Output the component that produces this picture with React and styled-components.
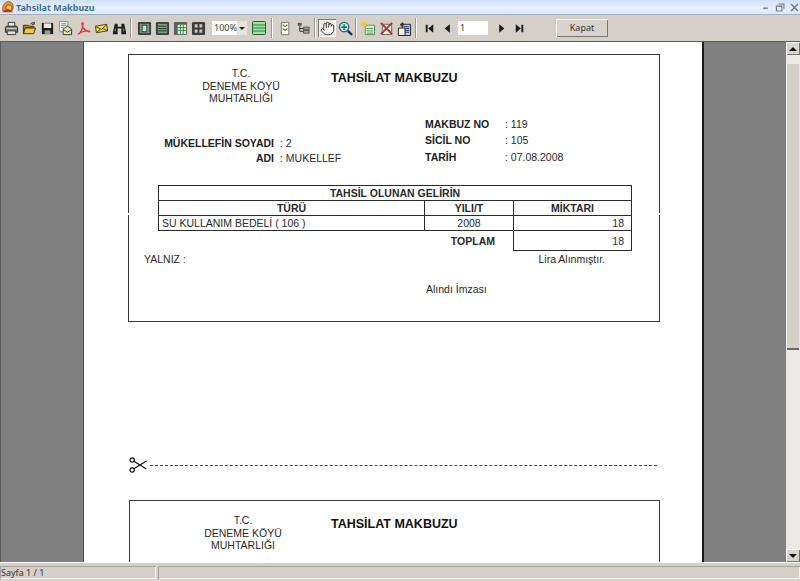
import React from "react";
import styled, { createGlobalStyle } from "styled-components";
import { Hand } from "lucide-react";

const GlobalStyle = createGlobalStyle`
  html, body {
    margin: 0;
    padding: 0;
    height: 100%;
    overflow: hidden;
    background: #d4d0c8;
  }
`;

const Window = styled.div`
  width: 800px;
  height: 581px;
  display: flex;
  flex-direction: column;
  overflow: hidden;
  background: #d4d0c8;
  font-family: "Noto Sans", "Liberation Sans", sans-serif;
`;

const TitleBar = styled.div`
  height: 14px;
  flex: none;
  display: flex;
  align-items: center;
  padding: 0 0 0 1px;
  background: linear-gradient(#cfe0f6, #e6f0fb 55%, #dce8f6);
  border-bottom: 1px solid #9fb0c2;
`;

const TitleText = styled.span`
  margin-left: 1px;
  font-size: 9px;
  font-weight: 700;
  color: #41709f;
`;

const WindowButtons = styled.div`
  margin-left: auto;
  display: flex;
  gap: 3px;
`;

const Toolbar = styled.div`
  height: 26px;
  flex: none;
  display: flex;
  align-items: center;
  padding-left: 2px;
  background: #d4d0c8;
  border-bottom: 1px solid #5a5a58;
`;

const ToolButton = styled.div`
  width: 18px;
  height: 18px;
  flex: none;
  display: flex;
  align-items: center;
  justify-content: center;
  background: ${(p) => (p.$pressed ? "#efedea" : "transparent")};
  box-shadow: ${(p) => (p.$pressed ? "inset 1px 1px 0 #807d76, inset -1px -1px 0 #fff" : "none")};
`;

const Separator = styled.div`
  width: 2px;
  height: 20px;
  flex: none;
  margin: 0 ${(p) => p.$right ?? 3}px 0 ${(p) => p.$left ?? 2}px;
  border-left: 1px solid #9a978f;
  border-right: 1px solid #fff;
  box-sizing: border-box;
`;

const Combo = styled.div`
  width: 35px;
  height: 14px;
  flex: none;
  margin: 0 3px 0 5px;
  display: flex;
  background: #fff;
  font-size: 9px;
  line-height: 14px;
  color: #444;
  padding-left: 2px;
  box-sizing: border-box;
`;

const ComboArrow = styled.span`
  margin-left: auto;
  width: 11px;
  background: #e6e3dd;
  display: flex;
  align-items: center;
  justify-content: center;
  &::after {
    content: "";
    border: 3px solid transparent;
    border-top: 3px solid #222;
    border-bottom: 0;
  }
`;

const PageInput = styled.div`
  width: 30px;
  height: 14px;
  flex: none;
  margin: 0 4px 0 2px;
  padding-left: 2px;
  box-sizing: border-box;
  background: #fff;
  font-size: 9px;
  line-height: 14px;
  color: #333;
`;

const CloseButton = styled.div`
  width: 52px;
  height: 18px;
  flex: none;
  margin-left: 28px;
  text-align: center;
  font-size: 9px;
  line-height: 18px;
  color: #333;
  background: #d8d4cd;
  box-shadow: inset 1px 1px 0 #f4f3f0, inset -1px -1px 0 #77746e;
`;

const Viewer = styled.div`
  height: 520px;
  flex: none;
  display: flex;
  background: #808080;
  overflow: hidden;
`;

const Desk = styled.div`
  flex: 1;
  padding-left: 83px;
  box-sizing: border-box;
  border-left: 1px solid #5c5c5c;
`;

const Page = styled.div`
  width: 621px;
  margin-left: -1px;
  height: 100%;
  padding: 12px 0 0 44px;
  box-sizing: border-box;
  background: #fff;
  border-left: 1px solid #4a4a4a;
  border-right: 2px solid #1a1a1a;
  overflow: hidden;
`;

const Receipt = styled.div`
  position: relative;
  width: ${(p) => (p.$second ? 531 : 532)}px;
  height: 268px;
  margin-left: ${(p) => (p.$second ? 1 : 0)}px;
  box-sizing: border-box;
  border: 1px solid #3a3a3a;
  padding-top: 12px;
  font-family: "Liberation Sans", Arial, sans-serif;
  font-size: 10.5px;
  color: #2a2a2a;
  /* the report has a small break in its side borders */
  &::after {
    content: "";
    position: absolute;
    left: -1px;
    right: -1px;
    top: 158px;
    height: 2px;
    border-left: 1px solid #fff;
    border-right: 1px solid #fff;
  }
`;

const HeadRow = styled.div`
  display: flex;
  align-items: flex-start;
`;

const Org = styled.div`
  width: ${(p) => p.$width}px;
  margin: ${(p) => p.$drop}px 0 0 ${(p) => p.$pad}px;
  flex: none;
  text-align: center;
  line-height: 12.5px;
`;

const Title = styled.div`
  margin-top: 4px;
  font-size: 12.5px;
  font-weight: 700;
  line-height: 14px;
  color: #111;
`;

const InfoRow = styled.div`
  display: grid;
  grid-template-columns: 296px 1fr;
  align-items: end;
  margin-top: 11px;
`;

const Taxpayer = styled.div`
  display: grid;
  grid-template-columns: 145px 1fr;
  column-gap: 6px;
  line-height: 15px;
`;

const Meta = styled.div`
  display: grid;
  grid-template-columns: 80px 1fr;
  line-height: 16.5px;
  padding-bottom: 1px;
`;

const Label = styled.span`
  font-weight: 700;
  color: #222;
  text-align: ${(p) => (p.$right ? "right" : "left")};
`;

const ReportTable = styled.table`
  margin: 19px 0 0 29px;
  width: 473px;
  border-collapse: collapse;
  table-layout: fixed;
  font-size: 10.5px;
  color: #2a2a2a;
`;

const Cell = styled.td`
  height: 14px;
  padding: 0 ${(p) => p.$pad ?? 3}px;
  line-height: 14px;
  white-space: nowrap;
  border: ${(p) => (p.$bare ? "0" : "1px solid #2a2a2a")};
  text-align: ${(p) => p.$align || "center"};
  font-weight: ${(p) => (p.$bold ? 700 : 400)};
`;

const TotalRow = styled.tr`
  height: 20px;
`;

const FootRow = styled.div`
  display: flex;
  justify-content: space-between;
  padding: 1px 54px 0 15px;
  line-height: 14px;
`;

const Signature = styled.div`
  margin: 16px 0 0 297px;
  line-height: 14px;
`;

const CutLine = styled.div`
  display: flex;
  align-items: center;
  height: 14px;
  margin: 136px 0 28px 1px;
  width: 528px;
`;

const Dashes = styled.div`
  flex: 1;
  margin-left: 3px;
  border-top: 1px dashed #444;
`;

const Scrollbar = styled.div`
  width: 14px;
  flex: none;
  display: flex;
  flex-direction: column;
  background: #ece9e4;
`;

const ScrollButton = styled.div`
  height: 13px;
  flex: none;
  margin-top: ${(p) => (p.$down ? "auto" : "0")};
  display: flex;
  align-items: center;
  justify-content: center;
  background: #d9d6cf;
  box-shadow: inset 1px 1px 0 #fff, inset -1px -1px 0 #77746e;
  &::after {
    content: "";
    border: 4px solid transparent;
    ${(p) => (p.$down ? "border-top: 4px solid #111; border-bottom: 0;" : "border-bottom: 4px solid #111; border-top: 0;")}
  }
`;

const ScrollThumb = styled.div`
  height: 286px;
  flex: none;
  margin-top: 9px;
  background: #d4d0c8;
  box-shadow: inset 1px 0 0 #f4f3f0, inset -1px 0 0 #e4e1db, inset 0 -2px 0 #6a6864;
`;

const StatusBar = styled.div`
  flex: 1;
  display: flex;
  gap: 2px;
  padding: 3px 0 2px 0;
  border-top: 1px solid #fff;
`;

const StatusPanel = styled.div`
  width: ${(p) => (p.$fill ? "auto" : "155px")};
  flex: ${(p) => (p.$fill ? 1 : "none")};
  padding-left: 1px;
  font-size: 9px;
  line-height: 13px;
  color: #333;
  box-shadow: inset 1px 1px 0 #a6a299, inset -1px -1px 0 #f4f3f0;
`;

const Svg = styled.svg.attrs({ viewBox: "0 0 16 16" })`
  width: ${(p) => p.$size || 15}px;
  height: ${(p) => p.$size || 15}px;
  display: block;
  flex: none;
`;

const AppIcon = () => (
  <Svg $size={14}>
    <path d="M2 12 C1 6 5 1 10 2 C14 3 15 8 13 12 Z" fill="#e8902a" stroke="#b9461c" />
    <circle cx="9" cy="9" r="3.5" fill="#f6d860" stroke="#c8301c" />
    <path d="M1 14 L8 10 L14 14 Z" fill="#cf2f1e" />
  </Svg>
);

const MinIcon = () => (
  <Svg $size={11}><path d="M3 9h7" stroke="#66788c" strokeWidth="2" /></Svg>
);
const RestoreIcon = () => (
  <Svg $size={11}>
    <path d="M5 3h8v7M2 6h8v7H2z" fill="none" stroke="#66788c" strokeWidth="1.6" />
  </Svg>
);
const CloseIcon = () => (
  <Svg $size={11}><path d="M3 3l10 10M13 3L3 13" stroke="#66788c" strokeWidth="2" /></Svg>
);

const PrintIcon = () => (
  <Svg>
    <path d="M4.5 1.5h7v5h-7z" fill="#eee" stroke="#333" />
    <path d="M1.5 7c0-1 1-1.5 2-1.5h9c1 0 2 .5 2 1.5v5h-13z" fill="#7d7d78" stroke="#222" />
    <path d="M3.5 10.5h9v4h-9z" fill="#ddd" stroke="#333" />
    <path d="M2.5 8h11" stroke="#d0d0cc" />
  </Svg>
);
const OpenIcon = () => (
  <Svg>
    <path d="M1.5 4.5h5l1 1h5v2h-9l-2 6z" fill="#a8861e" stroke="#3b3210" />
    <path d="M3.5 7.5h11l-2 6h-11z" fill="#ecc83e" stroke="#3b3210" />
    <path d="M9 3.5c1-2 3-2 4-1M13 1v2.5h-2.5" fill="none" stroke="#222" />
  </Svg>
);
const SaveIcon = () => (
  <Svg>
    <path d="M2 2h12v12H2z" fill="#1d1d1d" />
    <path d="M4 2.5h8v5H4z" fill="#e8e8e4" />
    <path d="M5 10h6v4H5z" fill="#9a9a96" />
  </Svg>
);
const MailDocIcon = () => (
  <Svg>
    <path d="M1.5 .5h9v11h-9z" fill="#fff" stroke="#7f8c90" />
    <path d="M3 3h6M3 5h6M3 7h3" stroke="#3c9a5c" />
    <path d="M5.5 8.5l4.5-3 4.5 3v6h-9z" fill="#f4e9b4" stroke="#333" />
    <path d="M5.5 9l4.5 3 4.5-3" fill="none" stroke="#333" />
  </Svg>
);
const PdfIcon = () => (
  <Svg>
    <path
      d="M2 14c3-1 5-6 5.5-11 0-2-1.500-1-1 1 1 4 4 7 8 7.500 1 0-1-1.500-4-1-3 .5-6 2-8.500 3.500z"
      fill="none"
      stroke="#dc3a32"
      strokeWidth="1.5"
    />
  </Svg>
);
const MailIcon = () => (
  <Svg>
    <path d="M1.5 5.500l12-2 1 7-12 2z" fill="#f3e24e" stroke="#3d3a18" />
    <path d="M2 6l6 3 5.500-5M3 12l4-3.500M14 10l-5-2" fill="none" stroke="#3d3a18" />
  </Svg>
);
const BinocularIcon = () => (
  <Svg>
    <path d="M3 3h3v3h4V3h3l2 9v2h-5V8H6v6H1v-2z" fill="#1f1f1f" />
    <path d="M3 8h1v3H3zM12 8h1v3h-1z" fill="#999" />
  </Svg>
);

const ViewFrame = ({ children, fill = "#7f9c82" }) => (
  <Svg>
    <rect x="1" y="1" width="14" height="14" rx="1.5" fill="#3d3d3d" />
    <rect x="3" y="3" width="10" height="10" fill={fill} />
    {children}
  </Svg>
);
const SingleIcon = () => (
  <ViewFrame><rect x="5.5" y="4.500" width="5" height="7" fill="#cfe0cf" stroke="#2b3a2b" /></ViewFrame>
);
const WidthIcon = () => (
  <ViewFrame><path d="M3.5 5.500h9M3.500 8h9M3.500 10.500h9" stroke="#1f3a24" /></ViewFrame>
);
const FacingIcon = () => (
  <Svg>
    <rect x="1" y="1" width="14" height="14" rx="1.5" fill="#5c5f5a" />
    <rect x="5" y="4" width="9" height="10" fill="#dcecd6" />
    <path d="M5 7h9M5 10h9M8 4v10M11 4v10" stroke="#2f8a4c" />
  </Svg>
);
const GridIcon = () => (
  <Svg>
    <rect x="1" y="1" width="14" height="14" rx="1.5" fill="#3d3d3d" />
    <path d="M4 3.500h3v3.500H4zM9 3.500h3v3.500H9zM4 9h3v3.500H4zM9 9h3v3.500H9z" fill="#c8ccc4" />
  </Svg>
);
const GreenPageIcon = () => (
  <Svg $size={16}>
    <rect x="1.5" y="1.5" width="13" height="13" rx="1" fill="#a6e0a6" stroke="#2f5a36" />
    <path d="M2 5h12M2 8h12M2 11h12" stroke="#1f8a3c" strokeWidth="1.2" />
  </Svg>
);
const ExpandIcon = () => (
  <Svg>
    <path d="M3.5 1.500h8v13h-8z" fill="#f6f6ee" stroke="#77756c" />
    <path d="M5 4l2.500 2L10 4M5 8l2.500 2L10 8" fill="none" stroke="#3a7a3a" strokeWidth="1.2" />
  </Svg>
);
const TreeIcon = () => (
  <Svg>
    <path d="M2 2h4v3H2z" fill="#555" />
    <path d="M4 5v6h4M4 8h4" fill="none" stroke="#333" />
    <path d="M8 6.500h6v3H8zM8 10h6v3H8z" fill="#9aa29a" stroke="#333" strokeWidth=".7" />
  </Svg>
);
const ZoomIcon = () => (
  <Svg>
    <circle cx="6.5" cy="6.500" r="5" fill="#cfe6f2" stroke="#2a5f8a" strokeWidth="1.4" />
    <path d="M6.500 3.500v6M3.500 6.500h6" stroke="#1c8a3a" strokeWidth="1.8" />
    <path d="M10.500 10.500l4.500 4.500" stroke="#1d2a5a" strokeWidth="2.4" />
  </Svg>
);
const NewNoteIcon = () => (
  <Svg>
    <path d="M4.500 4.500h10v10h-10z" fill="#dff0c8" stroke="#5c8a5c" />
    <path d="M6 8h7M6 10.500h7M6 13h7" stroke="#3c9a5c" />
    <path d="M3.500 0v7M0 3.500h7M1 1l5 5M6 1L1 6" stroke="#e8c832" />
  </Svg>
);
const DeleteIcon = () => (
  <Svg>
    <path d="M3.500 3.500h10v11h-10z" fill="#f2f0e2" stroke="#6a6a5c" />
    <path d="M2 2l12 12M14 2L2 14" stroke="#c02a22" strokeWidth="2" />
  </Svg>
);
const ClipIcon = () => (
  <Svg>
    <path d="M5.500 3.500h9v12h-9z" fill="#b8c8de" stroke="#222" />
    <path d="M7 6h6M7 8h6M7 10h6M7 12h6" stroke="#2a3a6a" />
    <path d="M1.500 7.500h7v8h-7z" fill="#f4f4ec" stroke="#222" />
    <path d="M6 1l2 3-3 2-2-2z" fill="#333" />
  </Svg>
);

const FirstIcon = () => (
  <Svg><path d="M4 4h2v8H4zM12 3.500v9L6.500 8z" fill="#1a1a1a" /></Svg>
);
const PrevIcon = () => (
  <Svg><path d="M10.500 3.500v9L5 8z" fill="#1a1a1a" /></Svg>
);
const NextIcon = () => (
  <Svg><path d="M5.500 3.500v9L11 8z" fill="#1a1a1a" /></Svg>
);
const LastIcon = () => (
  <Svg><path d="M10 4h2v8h-2zM4 3.500v9L9.500 8z" fill="#1a1a1a" /></Svg>
);

const ScissorsIcon = () => (
  <Svg $size={18}>
    <circle cx="2.8" cy="3.500" r="1.9" fill="none" stroke="#111" strokeWidth="1.1" />
    <circle cx="2.8" cy="12.500" r="1.9" fill="none" stroke="#111" strokeWidth="1.1" />
    <path d="M4.300 4.700L15.500 11.500M4.300 11.300L15.500 4.500" stroke="#111" strokeWidth="1.1" />
  </Svg>
);

// the second copy runs off the page, only its head is in view
const ReceiptHead = ({ second }) => (
  <HeadRow>
    <Org $pad={second ? 25 : 22} $width={second ? 176 : 180} $drop={second ? 1 : 0}>
      T.C.
      <br />
      DENEME KÖYÜ
      <br />
      MUHTARLIĞI
    </Org>
    <Title>TAHSİLAT MAKBUZU</Title>
  </HeadRow>
);

const ReceiptBody = () => (
  <>
    <InfoRow>
      <Taxpayer>
        <Label $right>MÜKELLEFİN SOYADI</Label>
        <span>: 2</span>
        <Label $right>ADI</Label>
        <span>: MUKELLEF</span>
      </Taxpayer>
      <Meta>
        <Label>MAKBUZ NO</Label>
        <span>: 119</span>
        <Label>SİCİL NO</Label>
        <span>: 105</span>
        <Label>TARİH</Label>
        <span>: 07.08.2008</span>
      </Meta>
    </InfoRow>
    <ReportTable>
      <colgroup>
        <col width="266" />
        <col width="89" />
        <col width="118" />
      </colgroup>
      <tbody>
        <tr>
          <Cell colSpan={3} $bold>TAHSİL OLUNAN GELİRİN</Cell>
        </tr>
        <tr>
          <Cell $bold>TÜRÜ</Cell>
          <Cell $bold>YILI/T</Cell>
          <Cell $bold>MİKTARI</Cell>
        </tr>
        <tr>
          <Cell $align="left">SU KULLANIM BEDELİ ( 106 )</Cell>
          <Cell>2008</Cell>
          <Cell $align="right" $pad={7}>18</Cell>
        </tr>
        <TotalRow>
          <Cell colSpan={2} $bare $bold $align="right" $pad={18}>TOPLAM</Cell>
          <Cell $align="right" $pad={7}>18</Cell>
        </TotalRow>
      </tbody>
    </ReportTable>
    <FootRow>
      <span>YALNIZ :</span>
      <span>Lira Alınmıştır.</span>
    </FootRow>
    <Signature>Alındı İmzası</Signature>
  </>
);

export default function App() {
  return (
    <Window>
      <GlobalStyle />
      <TitleBar>
        <AppIcon />
        <TitleText>Tahsilat Makbuzu</TitleText>
        <WindowButtons>
          <MinIcon />
          <RestoreIcon />
          <CloseIcon />
        </WindowButtons>
      </TitleBar>
      <Toolbar>
        <ToolButton><PrintIcon /></ToolButton>
        <ToolButton><OpenIcon /></ToolButton>
        <ToolButton><SaveIcon /></ToolButton>
        <ToolButton><MailDocIcon /></ToolButton>
        <ToolButton><PdfIcon /></ToolButton>
        <ToolButton><MailIcon /></ToolButton>
        <ToolButton><BinocularIcon /></ToolButton>
        <Separator />
        <ToolButton><SingleIcon /></ToolButton>
        <ToolButton><WidthIcon /></ToolButton>
        <ToolButton><FacingIcon /></ToolButton>
        <ToolButton><GridIcon /></ToolButton>
        <Combo>
          100%
          <ComboArrow />
        </Combo>
        <ToolButton><GreenPageIcon /></ToolButton>
        <Separator $left={3} />
        <ToolButton><ExpandIcon /></ToolButton>
        <ToolButton><TreeIcon /></ToolButton>
        <Separator $left={2} $right={2} />
        <ToolButton $pressed><Hand size={15} color="#222" fill="#fff" strokeWidth={1.4} /></ToolButton>
        <ToolButton><ZoomIcon /></ToolButton>
        <Separator $left={1} $right={2} />
        <ToolButton><NewNoteIcon /></ToolButton>
        <ToolButton><DeleteIcon /></ToolButton>
        <ToolButton><ClipIcon /></ToolButton>
        <Separator $left={2} $right={3} />
        <ToolButton><FirstIcon /></ToolButton>
        <ToolButton><PrevIcon /></ToolButton>
        <PageInput>1</PageInput>
        <ToolButton><NextIcon /></ToolButton>
        <ToolButton><LastIcon /></ToolButton>
        <CloseButton>Kapat</CloseButton>
      </Toolbar>
      <Viewer>
        <Desk>
          <Page>
            <Receipt>
              <ReceiptHead />
              <ReceiptBody />
            </Receipt>
            <CutLine>
              <ScissorsIcon />
              <Dashes />
            </CutLine>
            <Receipt $second>
              <ReceiptHead second />
            </Receipt>
          </Page>
        </Desk>
        <Scrollbar>
          <ScrollButton />
          <ScrollThumb />
          <ScrollButton $down />
        </Scrollbar>
      </Viewer>
      <StatusBar>
        <StatusPanel>Sayfa 1 / 1</StatusPanel>
        <StatusPanel $fill />
      </StatusBar>
    </Window>
  );
}
